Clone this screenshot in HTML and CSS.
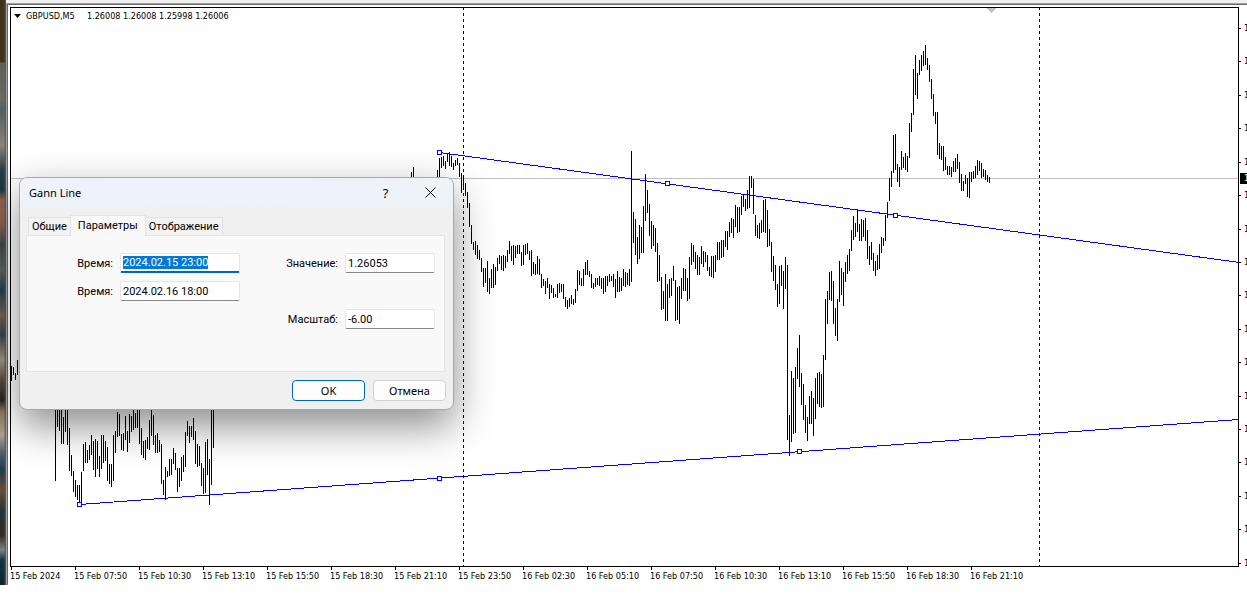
FILE: index.html
```html
<!DOCTYPE html>
<html lang="ru">
<head>
    <meta charset="UTF-8">
    <meta name="viewport" content="width=device-width, initial-scale=1.0">
    <title>GBPUSD,M5</title>
    <link rel="stylesheet" href="styles.css">
</head>
<body>
    <div class="desktop">
        <div class="wallpaper"></div>

        <main class="terminal">
            <div class="chart-window">
                <div class="chart-row">
                    <div class="plot">
                        <svg class="plot-canvas" aria-hidden="true">
                            <g transform="translate(-11 -8)">
                                <path class="price-line" d="M11 178.5H3000"/>
                                <path class="separator" d="M463.5 7V600M1039.5 7V600"/>
                                <path class="bars" id="bars"/>
                                <path class="gann" d="M439.5 152.5L2439.5 427.5"/>
                                <path class="gann" d="M79.5 504.5L2479.5 328.5"/>
                                <g class="handles">
                                    <rect x="437.5" y="150.5" width="4" height="4"/>
                                    <rect x="665.5" y="181.5" width="4" height="4"/>
                                    <rect x="893.5" y="213.5" width="4" height="4"/>
                                    <rect x="77.5" y="502.5" width="4" height="4"/>
                                    <rect x="437.5" y="476.5" width="4" height="4"/>
                                    <rect x="797.5" y="449.5" width="4" height="4"/>
                                </g>
                                <path class="shift-mark" d="M987 8H996L991.5 13Z"/>
                            </g>
                        </svg>
                        <div class="quote">
                            <svg width="7" height="4" aria-hidden="true"><path d="M0 0H7L3.5 4Z"/></svg>
                            <span class="symbol">GBPUSD,M5</span>
                            <span>1.26008 1.26008 1.25998 1.26006</span>
                        </div>
                    </div>
                    <div class="price-axis" id="priceAxis">
                        <span class="current-price">1</span>
                    </div>
                </div>
                <div class="time-axis">
                    <span>15 Feb 2024</span>
                    <span>15 Feb 07:50</span>
                    <span>15 Feb 10:30</span>
                    <span>15 Feb 13:10</span>
                    <span>15 Feb 15:50</span>
                    <span>15 Feb 18:30</span>
                    <span>15 Feb 21:10</span>
                    <span>15 Feb 23:50</span>
                    <span>16 Feb 02:30</span>
                    <span>16 Feb 05:10</span>
                    <span>16 Feb 07:50</span>
                    <span>16 Feb 10:30</span>
                    <span>16 Feb 13:10</span>
                    <span>16 Feb 15:50</span>
                    <span>16 Feb 18:30</span>
                    <span>16 Feb 21:10</span>
                </div>
            </div>
        </main>
    </div>

    <form class="dialog" role="dialog" aria-labelledby="dialogTitle">
        <div class="dialog-title">
            <span class="dialog-name" id="dialogTitle">Gann Line</span>
            <button type="button" class="title-btn help-btn">?</button>
            <button type="button" class="title-btn" aria-label="Закрыть">
                <svg width="11" height="11" viewBox="0 0 11 11" aria-hidden="true"><path d="M.5 .5L10.5 10.5M10.5 .5L.5 10.5"/></svg>
            </button>
        </div>

        <div class="tabs" role="tablist">
            <button type="button" class="tab" role="tab">Общие</button>
            <button type="button" class="tab active" role="tab" aria-selected="true">Параметры</button>
            <button type="button" class="tab" role="tab">Отображение</button>
        </div>

        <div class="panel" role="tabpanel">
            <label for="time1">Время:</label>
            <input id="time1" type="text" value="2024.02.15 23:00">
            <label for="value">Значение:</label>
            <input id="value" type="text" value="1.26053">
            <label for="time2">Время:</label>
            <input id="time2" type="text" value="2024.02.16 18:00">
            <label class="scale-label" for="scale">Масштаб:</label>
            <input class="scale-input" id="scale" type="text" value="-6.00">
        </div>

        <div class="dialog-footer">
            <button type="submit" class="btn btn-primary">OK</button>
            <button type="button" class="btn">Отмена</button>
        </div>
    </form>

    <script src="chart.js"></script>
</body>
</html>
```

FILE: styles.css
```css
* {
    margin: 0;
    padding: 0;
    box-sizing: border-box;
}

body {
    font-family: 'Noto Sans', 'Open Sans', sans-serif;
    font-size: 11px;
    line-height: 14px;
    color: #000;
    background: #fff;
    overflow: hidden;
}

.desktop {
    display: flex;
    font-family: 'DejaVu Sans Condensed', 'DejaVu Sans', sans-serif;
    font-size: 9px;
}

.wallpaper {
    flex: none;
    width: 6px;
    background: linear-gradient(to right, transparent 4px, rgba(90, 90, 90, 0.7) 5px),
        linear-gradient(#42321a 0, #42321a 62px, #5d6059 63px, #6a6b62 100px, #545f60 110px, #8a8378 145px, #263f48 170px, #1d3742 190px, #96604a 200px, #8f6250 222px, #40484a 245px, #5c6260 270px, #253f4c 290px, #6c6254 315px, #38434a 335px, #a39380 360px, #594b3e 380px, #2a2420 400px, #8d7763 412px, #b0a390 435px, #53616a 452px, #1d3c4c 470px, #6b4b32 490px, #27333a 510px, #312a22 535px, #7b8288 550px, #123442 560px, #0d2430 585px);
}

.terminal {
    flex: 1;
    min-width: 0;
    border-top: 3px solid #f0f0f0;
}

.chart-window {
    border-top: 1px solid #a0a0a0;
    border-left: 1px solid #a0a0a0;
    box-shadow: inset 1px 1px #696969;
    padding: 3px 0 0 3px;
    overflow: hidden;
}

.chart-row {
    display: flex;
}

.plot {
    position: relative;
    flex: 1;
    min-width: 0;
    border: 1px solid #000;
}

.plot-canvas {
    display: block;
    width: 100%;
    height: 558px;
    shape-rendering: crispEdges;
    fill: none;
}

.price-line {
    stroke: #c0c0c0;
}

.separator {
    stroke: #000;
    stroke-dasharray: 3 3;
}

.bars {
    stroke: #000;
}

.gann {
    stroke: #00f;
}

.handles {
    fill: #fff;
    stroke: #00f;
}

.shift-mark {
    fill: #c0c0c0;
}

.quote {
    position: absolute;
    top: 1px;
    left: 3px;
    display: flex;
    align-items: center;
    gap: 5px;
}

.symbol {
    min-width: 56px;
}

.price-axis {
    position: relative;
    flex: none;
    width: 8px;
    overflow: hidden;
}

.price-tick {
    position: absolute;
    left: 0;
    padding-left: 5px;
    transform: translateY(-50%);
}

.price-tick::before {
    content: "";
    position: absolute;
    left: 0;
    top: 7px;
    width: 2px;
    height: 1px;
    background: #000;
}

.current-price {
    position: absolute;
    z-index: 1;
    top: 166px;
    left: 1px;
    width: 50px;
    padding-left: 4px;
    line-height: 11px;
    color: #fff;
    background: #000;
}

.time-axis {
    display: flex;
    height: 18px;
    overflow: hidden;
}

.time-axis span {
    position: relative;
    flex: none;
    width: 64px;
    padding-top: 2px;
    white-space: nowrap;
}

.time-axis span::before {
    content: "";
    position: absolute;
    top: 0;
    left: 1px;
    width: 1px;
    height: 3px;
    background: #000;
}

.dialog {
    position: absolute;
    top: 177px;
    left: 19px;
    width: 435px;
    border: 1px solid #a8a8a8;
    border-radius: 8px;
    background: #f0f0f0;
    box-shadow: 0 16px 40px rgba(0, 0, 0, 0.45);
    overflow: hidden;
}

.dialog button,
.dialog input {
    font: inherit;
    color: #000;
}

.dialog-title {
    display: flex;
    align-items: center;
    height: 29px;
    padding-left: 9px;
    background: linear-gradient(to right, #eef3fa, #edf2fc 55%, #eef3f7);
}

.dialog-name {
    flex: 1;
}

.title-btn {
    width: 45px;
    height: 29px;
    border: none;
    background: none;
}

.dialog .help-btn {
    font-size: 13px;
}

.title-btn svg {
    display: block;
    margin: 0 auto;
    fill: none;
    stroke: #000;
}

.tabs,
.panel {
    font-family: Roboto, sans-serif;
}

.tabs {
    display: flex;
    align-items: flex-end;
    padding: 8px 8px 0;
}

.tab {
    height: 18px;
    padding: 1px 3px 0;
    border: 1px solid #e3e3e3;
    border-bottom: none;
    background: #f3f3f3;
}

.tab.active {
    position: relative;
    height: 21px;
    margin: 0 -1px -1px;
    padding: 0 7px 1px;
    background: #f9f9f9;
}

.panel {
    display: grid;
    grid-template-columns: 86px 120px 1fr 90px;
    grid-auto-rows: 20px;
    gap: 8px 7px;
    align-items: center;
    margin: 0 8px 0 6px;
    padding: 17px 9px 42px 0;
    border: 1px solid #e5e5e5;
    background: #f9f9f9;
}

.panel label {
    padding-top: 2px;
    text-align: right;
}

.scale-label {
    grid-row: 3;
    grid-column: 3;
}

.scale-input {
    grid-row: 3;
    grid-column: 4;
}

.panel input {
    width: 100%;
    height: 20px;
    padding: 0 2px;
    border: 1px solid #e5e5e5;
    border-bottom-color: #868686;
    border-radius: 2px;
    background: #fff;
    outline: none;
}

.panel input:focus {
    border-bottom: 2px solid #0067c0;
}

.panel input::selection {
    color: #fff;
    background: #0078d7;
}

.dialog-footer {
    display: flex;
    justify-content: flex-end;
    gap: 8px;
    padding: 8px 7px;
}

.btn {
    width: 73px;
    height: 21px;
    border: 1px solid #d0d0d0;
    border-radius: 4px;
    background: #fdfdfd;
}

.btn-primary {
    border-color: #0067c0;
}
```

FILE: chart.js
```js
// high/low of every bar, 2px apart, starting at x
const series = [
    { x: 11, bars: '366-381 367-375 373-380 360-375 351-362' },
    {
        x: 55,
        bars: '400-481 400-427 400-431 400-444 417-444 400-432 400-445 428-471 455-476 471-492 480-497 485-500 485-503 472-503 444-471 442-463 450-463 445-460 435-455 441-470 439-477 441-469 456-477 435-469 435-463 441-461 447-481 464-484 464-487 435-481 431-453 412-437 414-436 434-450 433-451 416-440 431-452 414-443 416-432 410-430 413-428 ' +
            '400-428 400-444 428-455 441-458 440-460 437-449 420-450 400-436 415-445 435-453 433-453 440-452 444-484 480-495 467-500 471-477 459-476 459-475 448-464 453-470 468-492 468-487 457-481 455-472 432-467 421-436 426-443 426-437 418-440 431-464 444-467 446-466 463-486 468-494 442-493 439-475 459-505 400-485 400-448'
    },
    { x: 357, bars: '177-182' },
    { x: 411, bars: '172-182 167-182' },
    {
        x: 435,
        bars: '177-190 170-190 158-182 157-168 156-166 161-169 154-162 152-166 156-167 163-170 160-166 158-165 163-177 173-193 175-190 183-196 192-208 203-227 225-244 242-250 241-255 245-259 250-260 258-272 268-287 268-283 261-292 278-294 269-288 264-288 267-285 258-271 255-264 256-270 255-271 256-268 250-262 241-254 246-261 245-265 246-258 245-254 245-254 252-266 245-265 244-255 243-254 251-260 250-276 262-274 264-275 256-274 259-275 274-288 279-286 281-294 278-288 284-299 285-293 288-298 294-297 284-298 283-293 ' +
            '284-292 284-299 297-307 300-309 298-307 295-304 299-305 289-303 270-291 271-285 278-286 269-286 262-275 260-275 271-277 274-288 283-289 278-287 278-285 276-286 278-289 278-294 276-292 276-286 274-282 276-281 274-287 279-298 271-292 277-292 278-291 269-286 272-287 273-285 269-286 151-282 212-243 219-255 237-264 225-259 227-253 206-253 174-221 190-213 204-236 221-249 225-246 228-252 243-282 255-281 277-310 291-309 274-321 284-321 279-298 278-296 266-281 280-321 287-320 286-324 278-299 268-291 269-291 278-301 257-299 243-265 245-262 252-269 255-275 257-275 246-264 251-267 252-262 255-271 267-276 256-277 256-278 255-272 242-260 242-260 240-258 240-257 231-247 231-250 222-237 218-233 219-238 205-227 207-233 207-232 196-215 195-207 199-211 190-209 176-208 176-188 179-214 ' +
            '215-236 225-238 223-239 220-233 200-232 199-233 210-247 229-246 242-272 256-281 265-290 284-307 266-304 265-286 271-309 257-289 265-440 415-456 371-442 378-434 367-433 348-379 335-387 373-405 384-420 405-433 417-441 396-424 391-424 398-436 378-419 373-404 372-407 374-408 355-407 299-360 291-324 272-300 271-301 281-324 308-336 299-341 261-302 268-295 272-306 262-282 255-274 249-271 230-251 216-240 223-237 210-232 224-241 219-241 220-237 218-241 230-259 246-265 242-260 253-271 261-276 255-270 244-269 237-253 238-246 ' +
            '215-241 202-218 178-201 171-187 135-173 134-170 164-182 167-187 151-170 157-168 153-170 156-172 123-158 113-132 69-115 55-95 73-99 60-75 55-71 51-66 45-65 58-70 65-82 79-99 94-116 112-124 112-155 143-159 146-160 146-171 157-170 166-175 166-175 167-177 161-172 158-172 154-169 162-183 174-191 181-191 175-184 178-197 172-198 172-182 171-179 166-178 160-175 161-171 163-178 169-177 170-180 175-182 177-183'
    }
];

let path = '';
series.forEach(({ x, bars }) => {
    bars.split(' ').forEach((bar, i) => {
        const [high, low] = bar.split('-');
        path += `M${x + i * 2 + 0.5} ${high}V${low}`;
    });
});
document.getElementById('bars').setAttribute('d', path);

// price scale marks, measured from the top of the plot
const priceAxis = document.getElementById('priceAxis');
[21, 54, 88, 121, 155, 188, 222, 255, 288, 322, 355, 389, 422, 455, 489, 522, 556].forEach(y => {
    const tick = document.createElement('span');
    tick.className = 'price-tick';
    tick.textContent = '1';
    tick.style.top = y + 'px';
    priceAxis.appendChild(tick);
});

document.getElementById('time1').select();
```
